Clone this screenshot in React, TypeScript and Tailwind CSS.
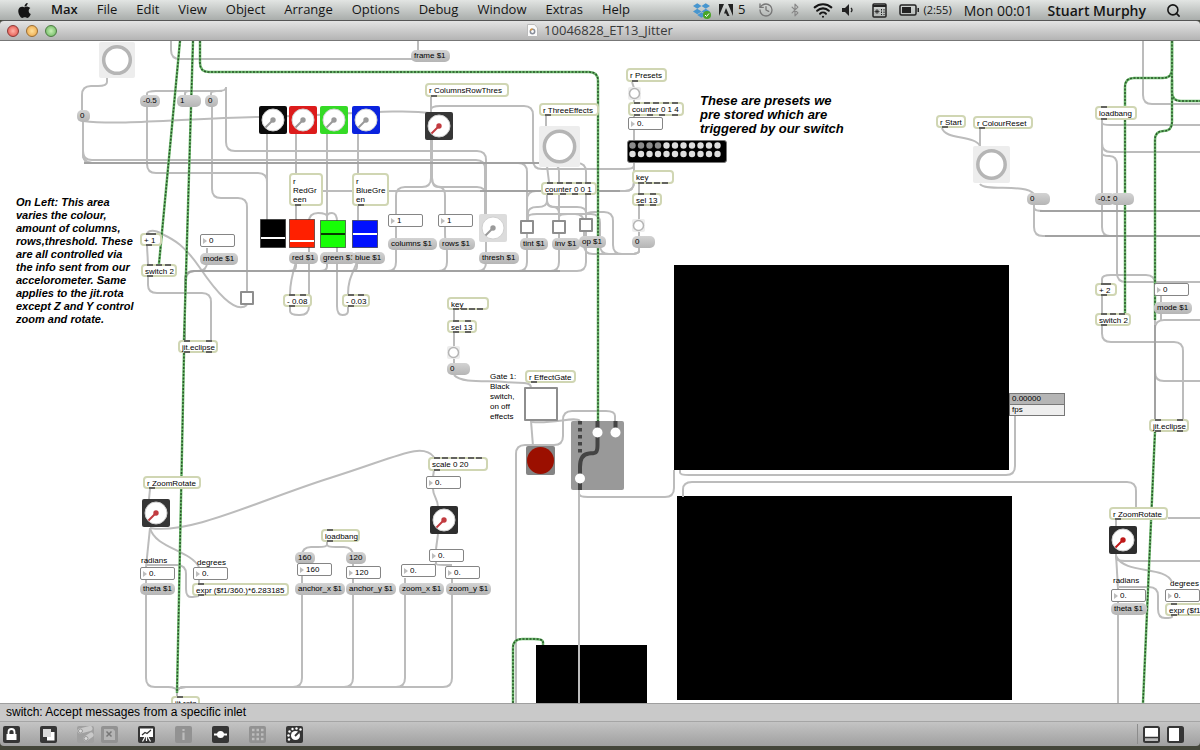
import type { CSSProperties, ReactNode } from "react";
import { Bluetooth, History, Search, Wifi } from "lucide-react";
import { FaApple, FaDropbox } from "react-icons/fa";
import clsx from "clsx";

// Vertical scroll offset of the patcher view
const SCROLL_Y = 41;

const menus = ["File", "Edit", "View", "Object", "Arrange", "Options", "Debug", "Window", "Extras", "Help"];

type Box = { x: number; y: number; w: number; h?: number };

const at = ({ x, y, w, h }: Box): CSSProperties => ({ left: x, top: y - SCROLL_Y, width: w, height: h });

type ObjectBox = Box & { text: string; ins?: number; outs?: number; multi?: boolean };

const objects: ObjectBox[] = [
    { x: 425, y: 83, w: 84, h: 14, text: "r ColumnsRowThres", outs: 1 },
    { x: 626, y: 68, w: 41, h: 14, text: "r Presets", outs: 1 },
    { x: 628, y: 102, w: 56, h: 14, text: "counter 0 1 4", ins: 5, outs: 4 },
    { x: 539, y: 103, w: 60, h: 13, text: "r ThreeEffects", outs: 1 },
    { x: 541, y: 182, w: 56, h: 13, text: "counter 0 0 1", ins: 5, outs: 4 },
    { x: 632, y: 170, w: 42, h: 14, text: "key", outs: 4 },
    { x: 632, y: 193, w: 30, h: 13, text: "sel 13", ins: 2, outs: 2 },
    { x: 447, y: 297, w: 42, h: 13, text: "key", outs: 4 },
    { x: 447, y: 320, w: 30, h: 13, text: "sel 13", ins: 2, outs: 2 },
    { x: 289, y: 173, w: 34, h: 33, text: "r\nRedGr\neen", outs: 1, multi: true },
    { x: 352, y: 173, w: 37, h: 33, text: "r\nBlueGre\nen", outs: 1, multi: true },
    { x: 140, y: 233, w: 22, h: 13, text: "+ 1", ins: 2, outs: 1 },
    { x: 141, y: 264, w: 36, h: 13, text: "switch 2", ins: 3, outs: 1 },
    { x: 178, y: 340, w: 40, h: 13, text: "jit.eclipse", ins: 2, outs: 2 },
    { x: 283, y: 294, w: 29, h: 13, text: "- 0.08", ins: 2, outs: 1 },
    { x: 342, y: 294, w: 28, h: 13, text: "- 0.03", ins: 2, outs: 1 },
    { x: 525, y: 370, w: 51, h: 13, text: "r EffectGate", outs: 1 },
    { x: 428, y: 457, w: 60, h: 14, text: "scale 0 20", ins: 6, outs: 1 },
    { x: 143, y: 476, w: 58, h: 13, text: "r ZoomRotate", outs: 1 },
    { x: 321, y: 529, w: 39, h: 13, text: "loadbang", ins: 1, outs: 1 },
    { x: 192, y: 583, w: 97, h: 13, text: "expr ($f1/360.)*6.283185", ins: 1, outs: 1 },
    { x: 171, y: 696, w: 29, h: 13, text: "jit.rota", ins: 1 },
    { x: 1095, y: 106, w: 42, h: 14, text: "loadbang", ins: 1, outs: 1 },
    { x: 1095, y: 283, w: 22, h: 13, text: "+ 2", ins: 2, outs: 1 },
    { x: 1095, y: 313, w: 36, h: 13, text: "switch 2", ins: 3, outs: 1 },
    { x: 936, y: 115, w: 30, h: 13, text: "r Start", outs: 1 },
    { x: 973, y: 116, w: 60, h: 13, text: "r ColourReset", outs: 1 },
    { x: 1149, y: 419, w: 40, h: 13, text: "jit.eclipse", ins: 2, outs: 2 },
    { x: 1109, y: 507, w: 59, h: 13, text: "r ZoomRotate", outs: 1 },
    { x: 1165, y: 603, w: 97, h: 13, text: "expr ($f1/360.)*6.283185", ins: 1, outs: 1 },
];

const messages: (Box & { text: string })[] = [
    { x: 140, y: 95, w: 20, text: "-0.5" },
    { x: 177, y: 95, w: 24, text: "1" },
    { x: 205, y: 95, w: 13, text: "0" },
    { x: 77, y: 110, w: 13, text: "0" },
    { x: 411, y: 50, w: 39, text: "frame $1" },
    { x: 200, y: 253, w: 38, text: "mode $1" },
    { x: 289, y: 252, w: 29, text: "red $1" },
    { x: 320, y: 252, w: 36, text: "green $1" },
    { x: 352, y: 252, w: 33, text: "blue $1" },
    { x: 388, y: 238, w: 49, text: "columns $1" },
    { x: 439, y: 238, w: 36, text: "rows $1" },
    { x: 479, y: 252, w: 40, text: "thresh $1" },
    { x: 520, y: 238, w: 28, text: "tint $1" },
    { x: 552, y: 238, w: 28, text: "inv $1" },
    { x: 579, y: 236, w: 27, text: "op $1" },
    { x: 632, y: 236, w: 23, text: "0" },
    { x: 447, y: 363, w: 23, text: "0" },
    { x: 140, y: 583, w: 35, text: "theta $1" },
    { x: 295, y: 552, w: 20, text: "160" },
    { x: 346, y: 552, w: 20, text: "120" },
    { x: 295, y: 583, w: 50, text: "anchor_x $1" },
    { x: 346, y: 583, w: 50, text: "anchor_y $1" },
    { x: 399, y: 583, w: 45, text: "zoom_x $1" },
    { x: 446, y: 583, w: 45, text: "zoom_y $1" },
    { x: 1027, y: 193, w: 23, text: "0" },
    { x: 1095, y: 193, w: 20, text: "-0.5" },
    { x: 1110, y: 193, w: 24, text: "0" },
    { x: 1154, y: 302, w: 38, text: "mode $1" },
    { x: 1111, y: 603, w: 36, text: "theta $1" },
];

const numbers: { x: number; y: number; value: string; name: string }[] = [
    { x: 200, y: 234, value: "0", name: "mode" },
    { x: 388, y: 214, value: "1", name: "columns" },
    { x: 438, y: 214, value: "1", name: "rows" },
    { x: 628, y: 117, value: "0.", name: "preset" },
    { x: 426, y: 476, value: "0.", name: "scale" },
    { x: 429, y: 549, value: "0.", name: "zoom" },
    { x: 401, y: 564, value: "0.", name: "zoom x" },
    { x: 445, y: 566, value: "0.", name: "zoom y" },
    { x: 297, y: 563, value: "160", name: "anchor x" },
    { x: 346, y: 566, value: "120", name: "anchor y" },
    { x: 140, y: 567, value: "0.", name: "radians" },
    { x: 193, y: 567, value: "0.", name: "degrees" },
    { x: 1154, y: 283, value: "0", name: "mode right" },
    { x: 1111, y: 589, value: "0.", name: "radians right" },
    { x: 1165, y: 589, value: "0.", name: "degrees right" },
];

const toggles: (Box & { name: string })[] = [
    { x: 240, y: 291, w: 14, h: 14, name: "switch toggle" },
    { x: 520, y: 220, w: 14, h: 14, name: "tint" },
    { x: 552, y: 220, w: 14, h: 14, name: "inv" },
    { x: 579, y: 218, w: 14, h: 14, name: "op" },
    { x: 524, y: 387, w: 34, h: 34, name: "effect gate" },
];

const bangs: { x: number; y: number; size: number }[] = [
    { x: 99, y: 42, size: 36 },
    { x: 539, y: 126, size: 41 },
    { x: 973, y: 146, size: 37 },
    { x: 628, y: 87, size: 13 },
    { x: 632, y: 219, size: 13 },
    { x: 447, y: 346, size: 13 },
];

const dials: { x: number; y: number; name: string; fill: string; needle: string }[] = [
    { x: 259, y: 106, name: "black dial", fill: "#0b0b0b", needle: "#9a9a9a" },
    { x: 289, y: 106, name: "red dial", fill: "#dc1c1c", needle: "#9a9a9a" },
    { x: 320, y: 106, name: "green dial", fill: "#35da26", needle: "#9a9a9a" },
    { x: 352, y: 106, name: "blue dial", fill: "#0a23de", needle: "#9a9a9a" },
    { x: 425, y: 112, name: "columns dial", fill: "#363636", needle: "#c23b40" },
    { x: 479, y: 214, name: "threshold dial", fill: "#dcdcdc", needle: "#9a9a9a" },
    { x: 142, y: 499, name: "rotate dial", fill: "#363636", needle: "#c23b40" },
    { x: 430, y: 506, name: "zoom dial", fill: "#2e2e2e", needle: "#c23b40" },
    { x: 1109, y: 526, name: "rotate dial right", fill: "#2e2e2e", needle: "#c01818" },
];

const faders: (Box & { name: string; fill: string; line: string; pos: number })[] = [
    { x: 260, y: 219, w: 26, h: 29, name: "black level", fill: "#000", line: "#fff", pos: 17 },
    { x: 289, y: 219, w: 26, h: 29, name: "red level", fill: "#ff2000", line: "#fff", pos: 20 },
    { x: 320, y: 220, w: 26, h: 28, name: "green level", fill: "#16ff05", line: "#063a00", pos: 12 },
    { x: 352, y: 220, w: 26, h: 28, name: "blue level", fill: "#0010ff", line: "#fff", pos: 12 },
];

const displays: Box[] = [
    { x: 674, y: 265, w: 335, h: 205 },
    { x: 677, y: 496, w: 335, h: 204 },
    { x: 536, y: 645, w: 111, h: 70 },
];

// Corner points of the straight patch cords; corners are rounded by route()
const cords = [
    "107,78 107,86 82,86 82,110",
    "171,41 171,59 412,59",
    "418,41 418,52",
    "147,96 147,91 224,91 226,88",
    "185,96 185,91 192,91",
    "211,96 211,91 222,91",
    "226,87 226,151 486,151 486,214",
    "147,106 147,173 267,173 267,220",
    "212,106 212,198 247,198 247,291",
    "83,121 83,160 485,160 485,214",
    "83,121 83,163 527,163 527,220",
    "83,140 83,163 559,163 559,220",
    "83,140 83,163 586,163 586,218",
    "634,162 634,191 527,191 527,220",
    "634,162 634,191 323,191",
    "431,97 431,112",
    "431,113 431,106 533,106 533,169 634,169 634,162",
    "431,140 431,187 396,187 396,271 380,271",
    "432,140 432,187 445,187 445,240 447,246 447,271 430,271",
    "432,140 432,187 486,187 486,271 470,271",
    "527,230 527,271 510,271",
    "559,230 559,271 542,271",
    "586,230 586,271 185,271 185,340",
    "207,248 207,271 186,271 186,290",
    "327,262 327,271 312,271",
    "357,262 357,271 345,271",
    "296,262 296,271 280,271",
    "267,134 267,220",
    "296,134 296,220",
    "327,134 327,220",
    "358,134 358,220",
    "290,307 290,315 309,315 309,213 327,213 327,220",
    "348,307 348,315 337,315 337,213 327,213 327,220",
    "546,116 546,126",
    "547,166 549,182",
    "547,195 547,207 528,207 528,220",
    "547,195 547,207 559,207 559,220",
    "547,195 547,207 586,207 586,218",
    "639,248 639,254 584,254 584,214 528,214 528,220",
    "639,248 639,254 600,254 600,214 559,214 559,220",
    "639,248 639,254 613,254 613,212 586,212 586,218",
    "632,82 634,88",
    "634,99 634,140",
    "639,184 639,238",
    "147,246 148,264",
    "148,277 148,293 211,293 211,340",
    "454,310 454,363",
    "531,421 533,446",
    "516,703 516,445 563,445 563,411 615,411 615,421",
    "579,485 579,703",
    "579,490 579,497 674,497 674,470",
    "680,470 680,475 1015,475 1015,410",
    "683,497 683,482 1136,482 1136,507",
    "150,489 149,499",
    "199,580 199,584",
    "199,596 186,598 186,565 147,565",
    "150,528 146,567",
    "146,580 146,687 177,687 177,696",
    "434,470 433,477",
    "438,534 436,549",
    "436,562 436,565 408,565",
    "436,562 436,565 452,565",
    "327,542 327,547 302,547 302,687 177,687 177,696",
    "327,542 327,547 353,547 353,687 177,687 177,696",
    "405,578 405,687 177,687 177,696",
    "452,578 452,687 177,687 177,696",
    "980,129 980,146",
    "1034,204 1034,211 1200,211",
    "1034,204 1034,236 1200,236",
    "1143,41 1143,104 1200,104",
    "1102,120 1102,125 1200,125",
    "1102,120 1102,152 1200,152",
    "1102,120 1102,236 1118,236",
    "1102,150 1102,156 1117,156 1117,282 1200,282",
    "1155,300 1155,275 1102,275 1102,283",
    "1102,295 1102,313",
    "1102,325 1102,342 1183,342 1183,419",
    "1161,296 1161,320",
    "1155,419 1155,320 1200,320",
    "1155,290 1155,381 1200,381",
    "1168,518 1200,518",
    "1116,520 1116,526",
    "1116,554 1116,561 1200,561",
    "1116,554 1118,589",
    "1172,616 1172,618 1158,618 1158,587 1119,587",
    "1118,600 1118,703",
];

const curves = [
    "M83,121 C120,126 190,118 260,117 S400,108 430,113",
    "M296,262 C292,275 290,285 290,294",
    "M357,262 C352,275 348,280 348,294",
    "M247,305 C235,315 215,290 200,268 S175,240 162,234 C155,230 150,230 147,233",
    "M454,375 C462,384 490,380 505,382 S530,381 531,387",
    "M532,422 C555,424 575,416 580,421",
    "M150,528 C190,535 260,500 330,478 S422,442 434,457",
    "M150,528 C155,548 190,550 199,567",
    "M433,489 C433,496 438,499 438,507",
    "M942,128 C945,140 975,135 980,146",
    "M980,184 C985,192 1025,183 1034,194",
    "M1116,556 C1125,575 1165,565 1172,582",
];

const thickCords = ["84,163 560,163", "560,271 185,271 185,340", "620,191 480,191", "1040,211 1200,211", "1045,236 1200,236", "1155,419 1155,325"];

const matrixCords = [
    "180,41 159,264",
    "193,41 184,340",
    "184,353 177,693",
    "200,41 200,72 598,72 598,421",
    "1172,41 1172,101 1200,101",
    "1172,41 1172,78 1125,78 1125,313",
    "1172,80 1172,131 1155,131 1155,320",
    "1155,431 1143,703",
    "513,703 513,639 543,639 543,645",
];

function route(points: string) {
    const pts = points.split(" ").map((p) => p.split(",").map(Number));
    let d = `M${pts[0]}`;
    for (let i = 1; i < pts.length - 1; i++) {
        const [px, py] = pts[i - 1];
        const [x, y] = pts[i];
        const [nx, ny] = pts[i + 1];
        const before = Math.hypot(x - px, y - py);
        const after = Math.hypot(nx - x, ny - y);
        const a = Math.min(9, before / 2);
        const b = Math.min(9, after / 2);
        d += ` L${x + ((px - x) * a) / before},${y + ((py - y) * a) / before}`;
        d += ` Q${x},${y} ${x + ((nx - x) * b) / after},${y + ((ny - y) * b) / after}`;
    }
    return `${d} L${pts[pts.length - 1]}`;
}

function Cords() {
    return (
        <svg className="absolute inset-0 h-[662px] w-[1200px]" viewBox="0 41 1200 662" fill="none" aria-hidden="true">
            <g stroke="#bcbcbc" strokeWidth="2">
                {cords.map((c) => <path key={c} d={route(c)} />)}
                {curves.map((c) => <path key={c} d={c} />)}
            </g>
            <g stroke="#a2a2a2" strokeWidth="2">
                {thickCords.map((c) => <path key={c} d={route(c)} />)}
            </g>
            {matrixCords.map((c) => (
                <g key={c}>
                    <path d={route(c)} stroke="#6dbb6d" strokeWidth="2.500" />
                    <path d={route(c)} stroke="#2a552a" strokeWidth="1.500" strokeDasharray="2 1.500" />
                </g>
            ))}
        </svg>
    );
}

function Ports({ count, className }: { count: number; className: string }) {
    return (
        <span className={clsx("absolute inset-x-1 flex", count > 1 && "justify-between", className)}>
            {Array.from({ length: count }, (_, i) => (
                <i key={i} className="h-[2px] w-[6px] bg-[#63635f]" />
            ))}
        </span>
    );
}

function PatchObject({ text, ins = 0, outs = 0, multi, ...box }: ObjectBox) {
    return (
        <div
            style={at(box)}
            className={clsx(
                "absolute rounded-[4px] border-2 border-[#d0d6b3] bg-white pl-[2px] text-[8px] whitespace-pre",
                multi ? "pt-[2px] leading-[9px]" : "leading-[11px]",
            )}
        >
            {text}
            <Ports count={ins} className="-top-[2px]" />
            <Ports count={outs} className="-bottom-[2px]" />
        </div>
    );
}

function Dial({ x, y, name, fill, needle }: (typeof dials)[number]) {
    return (
        <div style={at({ x, y, w: 28, h: 28 })} className="absolute">
            <svg viewBox="0 0 28 28" aria-hidden="true">
                <rect width="28" height="28" rx="2" fill={fill} />
                <circle cx="14" cy="14" r="11" fill="#fff" stroke="#d0d0d0" strokeWidth="1" />
                <path d="M14 14 6.500 21.500" stroke={needle} strokeWidth="2" />
                <circle cx="14" cy="14" r="2.700" fill={needle} />
            </svg>
            <input type="range" defaultValue={0} aria-label={name} className="absolute inset-0 size-full opacity-0" />
        </div>
    );
}

function Bang({ x, y, size }: (typeof bangs)[number]) {
    const small = size < 20;
    return (
        <button aria-label="bang" style={at({ x, y, w: size, h: size })} className="absolute rounded-[2px] bg-[#ededed]">
            <svg viewBox={`0 0 ${size} ${size}`} aria-hidden="true">
                <circle
                    cx={size / 2}
                    cy={size / 2}
                    r={small ? 5 : size * 0.37}
                    fill="#fff"
                    stroke="#b5b5b5"
                    strokeWidth={small ? 1.500 : 3.500}
                />
            </svg>
        </button>
    );
}

function Fader({ name, fill, line, pos, ...box }: (typeof faders)[number]) {
    return (
        <div style={at(box)} className="absolute">
            <svg className="size-full" viewBox={`0 0 26 ${box.h}`} aria-hidden="true">
                <rect x=".5" y=".5" width="25" height={(box.h ?? 28) - 1} fill={fill} stroke="#222" strokeOpacity=".6" />
                <path d={`M1 ${pos + 2}H25`} stroke={line} strokeWidth="2" />
            </svg>
            <input type="range" defaultValue={40} aria-label={name} className="absolute inset-0 size-full opacity-0" />
        </div>
    );
}

function NumberBox({ x, y, value, name }: (typeof numbers)[number]) {
    return (
        <div
            style={at({ x, y, w: 35, h: 13 })}
            className="absolute flex items-center gap-[2px] rounded-[2px] border border-[#858585] bg-white pl-[2px]"
        >
            <i className="border-y-[3px] border-l-[4px] border-y-transparent border-l-[#bdbdbd]" />
            <input aria-label={name} defaultValue={value} className="h-[10px] w-6 min-w-0 bg-transparent text-[8px] leading-[10px] outline-none" />
        </div>
    );
}

function PresetGrid() {
    return (
        <button aria-label="Presets" style={at({ x: 627, y: 140, w: 100, h: 23 })} className="absolute rounded-[3px] border border-[#777] bg-black">
            <svg viewBox="0 0 98 21" aria-hidden="true">
                {Array.from({ length: 22 }, (_, i) => (
                    <circle key={i} cx={4.500 + (i % 11) * 8.500} cy={i < 11 ? 4.500 : 13} r="3.200" fill={i < 4 ? "#8b8b8b" : "#dedede"} />
                ))}
            </svg>
        </button>
    );
}

function Gate() {
    return (
        <svg style={at({ x: 571, y: 421, w: 53, h: 69 })} className="absolute" viewBox="0 0 53 69" aria-hidden="true">
            <rect width="53" height="69" rx="2" fill="#999" />
            <path d="M9 0V33" stroke="#444" strokeWidth="4" strokeDasharray="3.500 3.500" />
            <path d="M26.500 0V24C26.500 33 24 32 18 32.500S9 37 9 46V69M44.500 0V10" fill="none" stroke="#444" strokeWidth="4" />
            <circle cx="26.500" cy="11.500" r="5" fill="#fff" />
            <circle cx="44.500" cy="11.500" r="5" fill="#fff" />
            <circle cx="9" cy="57.500" r="5" fill="#fff" />
        </svg>
    );
}

function Note({ x, y, w, className, children }: Box & { className: string; children: ReactNode }) {
    return (
        <p style={at({ x, y, w })} className={clsx("absolute whitespace-pre", className)}>
            {children}
        </p>
    );
}

function Patcher() {
    return (
        <main className="relative min-h-0 flex-1 overflow-hidden bg-white">
            {displays.map((d) => (
                <div key={d.y} style={at(d)} className="absolute bg-black" />
            ))}
            <Cords />
            {objects.map((o) => <PatchObject key={`${o.x}-${o.y}`} {...o} />)}
            {messages.map(({ text, ...box }) => (
                <button
                    key={`${box.x}-${box.y}`}
                    style={at(box)}
                    className="absolute h-3 overflow-hidden rounded-[5px] bg-linear-to-b from-[#d3d3d3] to-[#b5b5b5] pl-[3px] text-left text-[8px] leading-3 whitespace-nowrap"
                >
                    {text}
                </button>
            ))}
            {numbers.map((n) => <NumberBox key={n.name} {...n} />)}
            {toggles.map(({ name, ...box }) => (
                <input
                    key={name}
                    type="checkbox"
                    aria-label={name}
                    style={at(box)}
                    className="absolute appearance-none rounded-[1px] border-2 border-[#8e8e8e] bg-white"
                />
            ))}
            {bangs.map((b) => <Bang key={`${b.x}-${b.y}`} {...b} />)}
            {dials.map((d) => <Dial key={d.name} {...d} />)}
            {faders.map((f) => <Fader key={f.name} {...f} />)}
            <PresetGrid />
            <Gate />
            <button aria-label="Effect light" style={at({ x: 526, y: 446, w: 29, h: 29 })} className="absolute rounded-[2px] bg-[#848484] p-px">
                <i className="block size-full rounded-full bg-[#9b0f00]" />
            </button>
            <div style={at({ x: 1009, y: 393, w: 56, h: 23 })} className="absolute flex flex-col border border-[#777] bg-[#eee] text-[8px] leading-[10px]">
                <span className="border-b border-[#777] bg-[#b5b5b5] pl-[2px]">0.00000</span>
                <span className="pl-[2px]">fps</span>
            </div>

            <Note x={16} y={196} w={124} className="text-[11px] leading-[13px] font-bold italic">
                {"On Left: This area\nvaries the colour,\namount of columns,\nrows,threshold. These\nare all controlled via\nthe info sent from our\naccelorometer. Same\napplies to the jit.rota\nexcept Z and Y control\nzoom and rotate."}
            </Note>
            <Note x={700} y={94} w={150} className="text-[13px] leading-[14px] font-bold italic">
                {"These are presets we\npre stored which are\ntriggered by our switch"}
            </Note>
            <Note x={490} y={372} w={34} className="text-[8px] leading-[10px]">{"Gate 1:\nBlack\nswitch,\non off\neffects"}</Note>
            <Note x={141} y={556} w={34} className="text-[8px] leading-[10px]">radians</Note>
            <Note x={197} y={558} w={34} className="text-[8px] leading-[10px]">degrees</Note>
            <Note x={1113} y={576} w={34} className="text-[8px] leading-[10px]">radians</Note>
            <Note x={1170} y={579} w={34} className="text-[8px] leading-[10px]">degrees</Note>
        </main>
    );
}

function MenuBar() {
    return (
        <header className="flex h-5 shrink-0 items-center justify-between bg-linear-to-b from-[#e2e5e3] to-[#a9adab] pr-[19px] pl-[17px] font-['Open_Sans',sans-serif] text-[13px] font-medium text-[#151515]">
            <nav className="flex items-center gap-[19px]">
                <button aria-label="Apple menu"><FaApple className="h-[17px] w-[15px]" /></button>
                <button className="font-semibold">Max</button>
                {menus.map((m) => <button key={m}>{m}</button>)}
            </nav>
            <div className="flex items-center">
                <span className="relative mr-[9px]">
                    <FaDropbox className="size-[17px] text-[#4796cf]" />
                    <svg className="absolute -right-[1px] bottom-0 size-2" viewBox="0 0 8 8" aria-hidden="true">
                        <circle cx="4" cy="4" r="4" fill="#4aa527" />
                        <path d="M2 4 3.500 5.500 6 2.500" fill="none" stroke="#fff" />
                    </svg>
                </span>
                <svg className="mr-[5px] h-3 w-[14px]" viewBox="0 0 14 12" aria-hidden="true">
                    <path d="M0 0h5L0 12zM9 0h5v12zM7 4l3.500 8H8.200L7 9.500H5z" fill="#222" />
                </svg>
                <span className="mr-[13px]">5</span>
                <History className="mr-[14px] size-4 text-[#777]" />
                <Bluetooth className="mr-[11px] size-[14px] text-[#888]" />
                <Wifi className="mr-[9px] size-5" strokeWidth={2.500} />
                <svg className="mr-[19px] h-3 w-[11px]" viewBox="0 0 11 12" aria-hidden="true">
                    <path d="M0 4h3l4-4v12L3 8H0z" fill="#222" />
                    <path d="M9 4q2 2 0 4" fill="none" stroke="#222" strokeWidth="1.300" />
                </svg>
                <svg className="mr-3 size-[15px]" viewBox="0 0 15 15" aria-hidden="true">
                    <rect x="1" y="1" width="13" height="13" rx="1" fill="none" stroke="#222" strokeWidth="1.500" />
                    <path d="M1 3h13" stroke="#222" strokeWidth="2" />
                    <path d="M5 6v5M2.500 8.500h5M3.300 6.800l3.400 3.400M6.700 6.800 3.300 10.200" stroke="#222" strokeWidth=".8" />
                    <path d="M9.500 6v6M12 6v6" stroke="#222" strokeDasharray="1.500 1" />
                </svg>
                <svg className="mr-1 h-3 w-5" viewBox="0 0 20 12" aria-hidden="true">
                    <rect x="1" y="1" width="16" height="10" rx="1.500" fill="none" stroke="#222" strokeWidth="1.500" />
                    <path d="M3 3h9v6H3zM18.500 4h1.500v4h-1.500z" fill="#222" />
                </svg>
                <span className="mr-3 text-[11px]">(2:55)</span>
                <span className="mr-[15px] text-[14px]">Mon 00:01</span>
                <span className="mr-5 text-[14px] font-semibold">Stuart Murphy</span>
                <button aria-label="Spotlight"><Search className="size-[15px]" strokeWidth={2.500} /></button>
            </div>
        </header>
    );
}

function TitleBar() {
    return (
        <div className="relative flex h-[21px] shrink-0 items-center justify-center rounded-t-[4px] border-t border-b border-t-[#555] border-b-[#777] bg-linear-to-b from-[#e4e4e4] to-[#b4b4b4] font-['Open_Sans',sans-serif]">
            <div className="absolute left-[7px] flex gap-[7px]">
                <button aria-label="Close" className="size-3 rounded-full border border-[#8c3734] bg-radial from-[#ffb3a8] to-[#dc4040]" />
                <button aria-label="Minimise" className="size-3 rounded-full border border-[#9a6c31] bg-radial from-[#ffe09a] to-[#e8a23d]" />
                <button aria-label="Zoom" className="size-3 rounded-full border border-[#4c7b42] bg-radial from-[#c8f0b6] to-[#62b257]" />
            </div>
            <svg className="mr-[6px] h-[13px] w-[11px]" viewBox="0 0 11 13" aria-hidden="true">
                <path d="M.5.500h7L10.500 4v8.500H.5z" fill="#fafafa" stroke="#bbb" />
                <circle cx="5.500" cy="7.500" r="2.200" fill="none" stroke="#8a8f9b" strokeWidth="1.500" />
                <path d="M3.500 6.500a2.200 2.200 0 0 1 2-1.500" fill="none" stroke="#e39a3b" strokeWidth="1.500" />
            </svg>
            <h1 className="text-[13px] text-[#3a3a3a]">10046828_ET13_Jitter</h1>
        </div>
    );
}

function Tool({ name, dim, children }: { name: string; dim?: boolean; children: ReactNode }) {
    return (
        <button aria-label={name} disabled={dim} className={clsx("size-[17px] rounded-[2px]", dim ? "bg-[#929292] text-[#bdbdbd]" : "bg-[#353535] text-white")}>
            <svg viewBox="0 0 17 17" fill="none" stroke="currentColor" aria-hidden="true">{children}</svg>
        </button>
    );
}

function Toolbar() {
    return (
        <footer className="flex h-[25px] shrink-0 items-center justify-between rounded-b-[4px] border-t border-[#a5a5a5] bg-linear-to-b from-[#c4c4c4] to-[#a0a0a0] pr-4 pl-[3px]">
            <div className="flex gap-5">
                <Tool name="Lock patcher">
                    <path d="M5.500 8V6a3 3 0 0 1 6 0v2" strokeWidth="1.800" />
                    <path d="M3.500 8h10v6h-10z" fill="currentColor" stroke="none" />
                </Tool>
                <Tool name="New view">
                    <path d="M7 6h7.500v8.500H7z" fill="currentColor" stroke="none" />
                    <path d="M3 3h8v8H3z" fill="#d9d9d9" stroke="none" />
                </Tool>
                <div className="flex gap-[7px]">
                    <button aria-label="Patch cords" disabled className="size-[17px]">
                        <svg viewBox="0 0 17 17" fill="none" aria-hidden="true">
                            <rect width="17" height="17" rx="2" fill="#a0a0a0" />
                            <path d="M3 5 13 2.500M9 12.500l5-3.500" stroke="#c9c9c9" strokeWidth="5" strokeLinecap="round" />
                            <circle cx="3.500" cy="5" r="2" fill="#dadada" stroke="#999" />
                            <circle cx="9" cy="12.500" r="2" fill="#dadada" stroke="#999" />
                        </svg>
                    </button>
                    <Tool name="Close view" dim>
                        <path d="M3 3h9l2 2v9H3z" fill="#b5b5b5" stroke="none" />
                        <path d="m5.500 5.500 5 5m0-5-5 5" stroke="#777" strokeWidth="1.500" />
                    </Tool>
                </div>
                <Tool name="Presentation mode">
                    <path d="M2 2.500h13v8.500H2z" fill="currentColor" stroke="none" />
                    <path d="m4 9 3-2.500 2 1 4-3.500" stroke="#353535" strokeWidth="1.300" />
                    <path d="M8.500 11v4M7 11l-2.500 4.500M10 11l2.500 4.500" strokeWidth="1.200" />
                </Tool>
                <Tool name="Inspector" dim>
                    <path d="M8.500 3v2M8.500 6.500V14" strokeWidth="2.200" />
                </Tool>
                <Tool name="Insert object">
                    <path d="M2 8.500h13" strokeWidth="2" />
                    <circle cx="8.500" cy="8.500" r="3.500" fill="currentColor" stroke="none" />
                </Tool>
                <Tool name="Grid" dim>
                    <path d="M3 4h12M3 8.500h12M3 13h12" strokeWidth="2.500" strokeDasharray="2.500 2" />
                </Tool>
                <Tool name="Audio">
                    <circle cx="9.500" cy="9.500" r="4.500" fill="currentColor" stroke="none" />
                    <path d="m9 10 4-4" stroke="#353535" strokeWidth="1.800" />
                    <g fill="currentColor" stroke="none">
                        <circle cx="3" cy="13.500" r="1.200" />
                        <circle cx="2.500" cy="9.500" r="1.200" />
                        <circle cx="3.500" cy="5.500" r="1.200" />
                        <circle cx="6.500" cy="3" r="1.200" />
                        <circle cx="10.500" cy="2.500" r="1.200" />
                        <circle cx="14.500" cy="3.500" r="1.200" />
                    </g>
                </Tool>
            </div>
            <div className="flex h-5 items-center gap-[7px] border-l border-[#8c8c8c] pl-[5px]">
                <button aria-label="Show bottom bar" className="size-[17px]">
                    <svg viewBox="0 0 17 17" aria-hidden="true">
                        <rect x="1" y="1" width="15" height="15" rx="1.500" fill="#fff" stroke="#363636" strokeWidth="2" />
                        <path d="M2 12h13v3H2z" fill="#bbb" />
                        <path d="M2 11.500h13" stroke="#363636" strokeWidth="1.500" />
                    </svg>
                </button>
                <button aria-label="Show sidebar" className="size-[17px]">
                    <svg viewBox="0 0 17 17" aria-hidden="true">
                        <rect x="1" y="1" width="15" height="15" rx="1.500" fill="#fff" stroke="#363636" strokeWidth="2" />
                        <path d="M12 1h4v15h-4z" fill="#363636" />
                    </svg>
                </button>
            </div>
        </footer>
    );
}

export default function App() {
    return (
        <div className="flex h-screen flex-col overflow-hidden bg-[#44463a] pb-1 font-['Liberation_Sans',Arial,sans-serif] text-black">
            <MenuBar />
            <TitleBar />
            <Patcher />
            <div className="h-[18px] shrink-0 border-t border-[#9f9f9f] bg-[#c9c9c9] pl-[6px] text-[12px] leading-[17px]">
                switch: Accept messages from a specific inlet
            </div>
            <Toolbar />
        </div>
    );
}
